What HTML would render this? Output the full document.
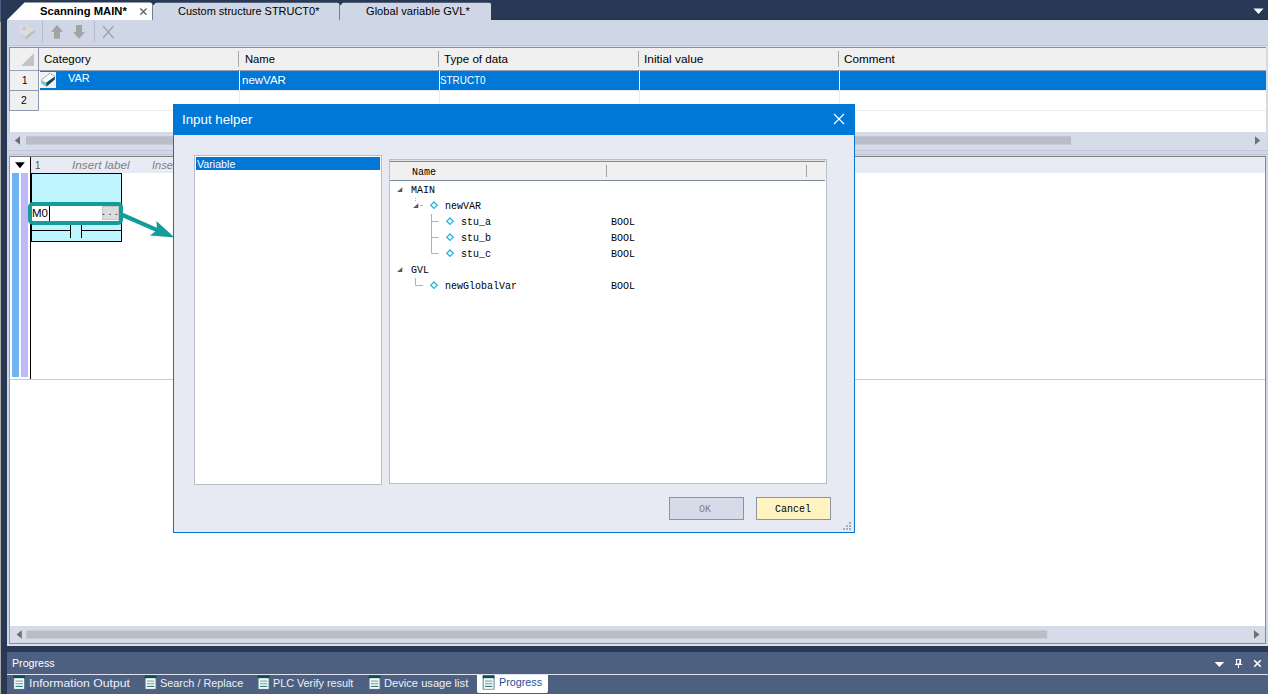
<!DOCTYPE html>
<html><head><meta charset="utf-8"><title>Input helper</title>
<style>
*{box-sizing:border-box;margin:0;padding:0}
html,body{width:1268px;height:694px;overflow:hidden;background:#293955;font-family:"Liberation Sans",sans-serif;font-size:11.5px;color:#000}
#root{position:relative;width:1268px;height:694px;overflow:hidden;background:#293955}
#root div,#root svg{position:absolute}
.t{white-space:nowrap;line-height:16px;transform-origin:0 0}
.m{font-family:"Liberation Mono",monospace}
</style></head><body>
<div id="root">
<!-- window left edge -->
<div style="left:0;top:0;width:1px;height:22px;background:#4d6082"></div>
<div style="left:0;top:22px;width:1px;height:672px;background:#a9a9a9"></div>

<!-- document tab strip -->
<div style="left:1px;top:19px;width:1267px;height:1px;background:#233150"></div>
<svg style="left:0;top:0" width="1268" height="21" viewBox="0 0 1268 21">
  <path d="M153 20 V2.7 H339.5 V20 Z" fill="#cfd6e5"/>
  <path d="M340 20 V2.7 H489.5 Q491 2.7 491 4.2 V20 Z" fill="#cfd6e5"/>
  <path d="M7 20 L24.5 2.6 H152.5 V20 Z" fill="#ffffff"/>
  <path d="M150.4 2 H156.6 L153.5 5.3 Z M337.4 2 H343.6 L340.5 5.3 Z" fill="#293955"/>
  <path d="M152.5 5 V20 M339.5 5 V20" stroke="#6f7d9c" stroke-width="1"/>
  <path d="M1253.5 8.5 H1263.5 L1258.5 14 Z" fill="#fff"/>
  <path d="M140.3 8.6 L146.5 14.8 M146.5 8.6 L140.3 14.8" stroke="#666" stroke-width="1.4" fill="none"/>
</svg>
<div class="t" style="left:40px;top:3px;transform:scaleX(0.9775);font-weight:bold">Scanning MAIN*</div>
<div class="t" style="left:178px;top:3px;transform:scaleX(0.9541)">Custom structure STRUCT0*</div>
<div class="t" style="left:366px;top:3px;transform:scaleX(0.9657)">Global variable GVL*</div>

<!-- editor area background -->
<div style="left:7px;top:20px;width:1261px;height:626px;background:#cfd6e5"></div>

<!-- toolbar -->
<svg style="left:7px;top:20px" width="130" height="25" viewBox="0 0 130 25">
  <path d="M35.5 1 V22 M87.5 1 V22" stroke="#b5bac8" stroke-width="1"/>
  <path d="M50 5 L56 11.8 H53 V18.8 H47 V11.8 H44 Z" fill="#a3a3a3"/>
  <path d="M72 18.8 L78 12.2 H75 V5 H69 V12.2 H66 Z" fill="#a3a3a3"/>
  <path d="M96.3 6.3 L106.5 18 M106.3 6.3 L96 18" stroke="#a3a3a3" stroke-width="1.4" fill="none"/>
  <path d="M14.3 14.2 L19 16.1 V19.6 L14.5 17.5 Z" fill="#cfcfcf"/>
  <path d="M19 16.1 L27.7 9.5 V12.3 L19 19.6 Z" fill="#bdbdbd"/>
  <path d="M14.5 14.5 L23.7 7.1 L27.7 9.5 L19 16.1 Z" fill="#dcdcdc"/>
  <path d="M12 8.5 H22.2 M17.1 3.4 V13.6 M13.5 4.9 L20.7 12.1 M20.7 4.9 L13.5 12.1" stroke="#dedede" stroke-width="1.6"/>
  <circle cx="17.1" cy="8.5" r="2" fill="#c9c9c9"/>
</svg>

<!-- variable grid -->
<div style="left:7px;top:45px;width:1261px;height:1px;background:#c3c7d1"></div>
<div style="left:7px;top:46px;width:1261px;height:1px;background:#d9deea"></div>
<div style="left:9px;top:47px;width:1258px;height:103px;background:#fff"></div>
<div style="left:9px;top:47px;width:1258px;height:1px;background:#8490a8"></div>
<div style="left:9px;top:47px;width:1px;height:85px;background:#c4cbdb"></div>
<div style="left:1266px;top:47px;width:1px;height:103px;background:#d9dde8"></div>
<div style="left:10px;top:48px;width:1256px;height:22px;background:#f0f0f0"></div>
<div style="left:10px;top:70px;width:29px;height:41px;background:#f0f0f0"></div>
<div style="left:10px;top:70px;width:1256px;height:1px;background:#9aa3b5"></div>
<div style="left:38px;top:48px;width:1px;height:63px;background:#8c98b0"></div>
<div style="left:10px;top:90px;width:29px;height:1px;background:#8c98b0"></div>
<div style="left:10px;top:110px;width:29px;height:1px;background:#8c98b0"></div>
<div style="left:9px;top:47px;width:1px;height:64px;background:#8490a8"></div>
<div style="left:40px;top:110px;width:1226px;height:1px;background:#ececec"></div>
<div style="left:40px;top:90px;width:1226px;height:1px;background:#ececec"></div>
<div style="left:238px;top:51px;width:1px;height:16px;background:#a8a8a8"></div>
<div style="left:438px;top:51px;width:1px;height:16px;background:#a8a8a8"></div>
<div style="left:638px;top:51px;width:1px;height:16px;background:#a8a8a8"></div>
<div style="left:838px;top:51px;width:1px;height:16px;background:#a8a8a8"></div>
<div style="left:239px;top:90px;width:1px;height:20px;background:#ececec"></div>
<div style="left:439px;top:90px;width:1px;height:20px;background:#ececec"></div>
<div style="left:639px;top:90px;width:1px;height:20px;background:#ececec"></div>
<div style="left:839px;top:90px;width:1px;height:20px;background:#ececec"></div>
<svg style="left:20px;top:52px" width="15" height="15"><path d="M14 1 V14 H1 Z" fill="#c0c4cc"/></svg>
<div class="t" style="left:44px;top:51px;transform:scaleX(1.0000)">Category</div>
<div class="t" style="left:245px;top:51px;transform:scaleX(0.9774)">Name</div>
<div class="t" style="left:444px;top:51px;transform:scaleX(1.0094)">Type of data</div>
<div class="t" style="left:644px;top:51px;transform:scaleX(1.0310)">Initial value</div>
<div class="t" style="left:844px;top:51px;transform:scaleX(1.0180)">Comment</div>
<!-- selected row -->
<div style="left:40px;top:71px;width:1226px;height:19px;background:#0078d7"></div>
<div style="left:239px;top:71px;width:1px;height:19px;background:#fff"></div>
<div style="left:439px;top:71px;width:1px;height:19px;background:#fff"></div>
<div style="left:639px;top:71px;width:1px;height:19px;background:#fff"></div>
<div style="left:839px;top:71px;width:1px;height:19px;background:#fff"></div>
<div style="left:40px;top:72px;width:16px;height:16px;background:#f3f3f3"></div>
<svg style="left:40px;top:72px" width="16" height="16" viewBox="0 0 16 16">
  <path d="M1.2 7.8 L6.2 10.5 L6.4 14.7 L1.2 11.6 Z" fill="#7cc6c2"/>
  <path d="M6.2 10.5 L14.8 4.3 V7.4 L6.4 14.7 Z" fill="#0f4a5a"/>
  <path d="M1.5 7.8 L9.7 1.2 L14.8 4.3 L6.2 10.5 Z" fill="#fbfbfb"/>
  <path d="M1.5 7.8 L9.7 1.2 L14.8 4.3" fill="none" stroke="#5f8196" stroke-width="1" stroke-dasharray="1.2 0.8"/>
</svg>
<div class="t" style="left:68px;top:70px;transform:scaleX(0.9522);color:#fff">VAR</div>
<div class="t" style="left:242px;top:72px;transform:scaleX(1.0000);color:#fff">newVAR</div>
<div class="t" style="left:440px;top:72px;transform:scaleX(0.8585);color:#fff">STRUCT0</div>
<div class="t" style="left:22px;top:72px;transform:scaleX(0.8500)">1</div>
<div class="t" style="left:21px;top:92px;transform:scaleX(0.9000)">2</div>
<!-- grid horizontal scrollbar -->
<div style="left:9px;top:132px;width:1258px;height:18px;background:#d6dbe9"></div>

<svg style="left:9px;top:132px" width="1258" height="18"><rect x="17" y="4.3" width="1045" height="8.3" fill="#b9bdc6"/><path d="M11 4.2 V12.8 L5.8 8.5 Z" fill="#707070"/><path d="M1246 4.2 V12.8 L1251.2 8.5 Z" fill="#707070"/></svg>
<div style="left:7px;top:150px;width:1261px;height:1px;background:#c1c7d6"></div>
<div style="left:7px;top:154px;width:1261px;height:1px;background:#c1c7d6"></div>

<!-- ladder editor -->
<div style="left:9px;top:156px;width:1257px;height:488px;background:#fff"></div>
<div style="left:9px;top:156px;width:1257px;height:1px;background:#808080"></div>
<div style="left:9px;top:156px;width:1px;height:488px;background:#9a9a9a"></div>
<div style="left:1265px;top:156px;width:1px;height:488px;background:#8a8a8a"></div>
<div style="left:9px;top:643px;width:1257px;height:1px;background:#8a8a8a"></div>
<div style="left:7px;top:644px;width:1261px;height:2px;background:#dbe0ec"></div>
<div style="left:31px;top:157px;width:1234px;height:16px;background:#e8ebf3"></div>
<div style="left:30px;top:157px;width:1px;height:223px;background:#000"></div>
<div style="left:10px;top:379px;width:1255px;height:1px;background:#cbcbcb"></div>
<svg style="left:12px;top:159px" width="16" height="12"><path d="M3 3.2 H12.8 L7.9 9.2 Z" fill="#000"/></svg>
<div style="left:12px;top:173px;width:7px;height:204px;background:#6eb4f0"></div>
<div style="left:21px;top:173px;width:7px;height:204px;background:#beb9fa"></div>
<div class="t" style="left:35px;top:157px;transform:scaleX(0.8500);color:#5a5046">1</div>
<div class="t" style="left:72px;top:157px;transform:scaleX(1.0246);color:#808080;font-style:italic">Insert label</div>
<div class="t" style="left:152px;top:157px;transform:scaleX(0.9625);color:#808080;font-style:italic">Insert comment</div>
<!-- contact element -->
<div style="left:31px;top:173px;width:91px;height:69px;background:#bff5ff;border:1px solid #000"></div>
<div style="left:32px;top:230px;width:38px;height:1px;background:#000"></div>
<div style="left:82px;top:230px;width:39px;height:1px;background:#000"></div>
<div style="left:70px;top:224px;width:1px;height:14px;background:#000"></div>
<div style="left:81px;top:224px;width:1px;height:14px;background:#000"></div>
<div style="left:28px;top:202px;width:95px;height:23px;border:4px solid #169b9b;border-radius:5px;background:#fff"></div>
<div style="left:102px;top:206px;width:17px;height:14px;background:#dcdcdc;border:1px solid #c6c6c6"></div>
<div class="t" style="left:102px;top:203px;letter-spacing:3.2px;color:#222">...</div>
<div class="t" style="left:32px;top:205px;transform:scaleX(1.0000)">M0</div>
<div style="left:49px;top:206px;width:1px;height:15px;background:#000"></div>

<!-- ladder horizontal scrollbar -->
<div style="left:10px;top:626px;width:1255px;height:17px;background:#d6dbe9"></div>

<svg style="left:10px;top:626px" width="1256" height="18"><rect x="16.4" y="4.5" width="1020.7" height="8" fill="#b9bdc6"/><path d="M11.8 4.2 V12.8 L6.5 8.5 Z" fill="#707070"/><path d="M1244 4.2 V12.8 L1249.5 8.5 Z" fill="#707070"/></svg>

<!-- output panel -->
<div style="left:7px;top:652px;width:1261px;height:42px;background:#4d6082"></div>
<div style="left:7px;top:674px;width:1261px;height:1px;background:#dfe4ee"></div>
<div class="t" style="left:12px;top:655px;transform:scaleX(0.9261);color:#fff">Progress</div>
<svg style="left:1210px;top:655px" width="56" height="16" viewBox="0 0 56 16">
  <path d="M4.6 7 H14.2 L9.4 12 Z" fill="#fff"/>
  <path d="M26.5 4.5 H30.5 V9 H26.5 Z M25 9.5 H32.2 M28.5 10 V13" stroke="#fff" stroke-width="1.1" fill="none"/><path d="M29.3 4 h1.7 v5.5 h-1.7z" fill="#fff"/>
  <path d="M44.2 5.2 L50.8 11.8 M50.8 5.2 L44.2 11.8" stroke="#fff" stroke-width="1.6" fill="none"/>
</svg>
<div style="left:477px;top:675px;width:71px;height:18px;background:#fff;border-radius:0 0 2px 2px"></div>
<div class="t" style="left:29px;top:675px;transform:scaleX(1.0583);color:#eef1f6">Information Output</div>
<div class="t" style="left:160px;top:675px;transform:scaleX(0.9432);color:#eef1f6">Search / Replace</div>
<div class="t" style="left:273px;top:675px;transform:scaleX(0.9384);color:#eef1f6">PLC Verify result</div>
<div class="t" style="left:384px;top:675px;transform:scaleX(0.9690);color:#eef1f6">Device usage list</div>
<div class="t" style="left:499px;top:674px;transform:scaleX(0.9348);color:#1b4f9c">Progress</div>
<svg style="left:0;top:674px" width="500" height="20" viewBox="0 0 500 20">
  <g transform="translate(0 0)"><rect x="13.2" y="1.4" width="11.8" height="14.2" fill="#3f7f88"/><rect x="13.2" y="1.4" width="11.8" height="2.8" fill="#0f4a55"/><rect x="14.1" y="4.2" width="10" height="10.7" fill="#f6f8f6"/><path d="M15.5 7.1 H22.8 M15.5 9.7 H22.8" stroke="#86aeb0" stroke-width="1.2"/><path d="M15.5 12.4 H22.8" stroke="#2f7680" stroke-width="1.1"/></g>
  <g transform="translate(131.5 0)"><rect x="13.2" y="1.4" width="11.8" height="14.2" fill="#3f7f88"/><rect x="13.2" y="1.4" width="11.8" height="2.8" fill="#0f4a55"/><rect x="14.1" y="4.2" width="10" height="10.7" fill="#f6f8f6"/><path d="M15.5 7.1 H22.8 M15.5 9.7 H22.8" stroke="#86aeb0" stroke-width="1.2"/><path d="M15.5 12.4 H22.8" stroke="#2f7680" stroke-width="1.1"/></g>
  <g transform="translate(244.5 0)"><rect x="13.2" y="1.4" width="11.8" height="14.2" fill="#3f7f88"/><rect x="13.2" y="1.4" width="11.8" height="2.8" fill="#0f4a55"/><rect x="14.1" y="4.2" width="10" height="10.7" fill="#f6f8f6"/><path d="M15.5 7.1 H22.8 M15.5 9.7 H22.8" stroke="#86aeb0" stroke-width="1.2"/><path d="M15.5 12.4 H22.8" stroke="#2f7680" stroke-width="1.1"/></g>
  <g transform="translate(355.5 0)"><rect x="13.2" y="1.4" width="11.8" height="14.2" fill="#3f7f88"/><rect x="13.2" y="1.4" width="11.8" height="2.8" fill="#0f4a55"/><rect x="14.1" y="4.2" width="10" height="10.7" fill="#f6f8f6"/><path d="M15.5 7.1 H22.8 M15.5 9.7 H22.8" stroke="#86aeb0" stroke-width="1.2"/><path d="M15.5 12.4 H22.8" stroke="#2f7680" stroke-width="1.1"/></g>
  <g transform="translate(469.5 0)"><rect x="13.2" y="1.4" width="11.8" height="14.2" fill="#3f7f88"/><rect x="13.2" y="1.4" width="11.8" height="2.8" fill="#0f4a55"/><rect x="14.1" y="4.2" width="10" height="10.7" fill="#f6f8f6"/><path d="M15.5 7.1 H22.8 M15.5 9.7 H22.8" stroke="#86aeb0" stroke-width="1.2"/><path d="M15.5 12.4 H22.8" stroke="#2f7680" stroke-width="1.1"/></g>
</svg>

<!-- Input helper dialog -->
<div style="left:173px;top:104px;width:682px;height:429px;background:#e7eaf3;border:1px solid #0078d7"></div>
<div style="left:173px;top:104px;width:682px;height:31px;background:#0078d7"></div>
<div class="t" style="left:182px;top:112px;transform:scaleX(1.1094);font-size:12px;color:#fff">Input helper</div>
<svg style="left:830px;top:110px" width="18" height="18" viewBox="0 0 18 18"><path d="M4 4 L14 14 M14 4 L4 14" stroke="#fff" stroke-width="1.2" fill="none"/></svg>
<div style="left:194px;top:155px;width:188px;height:330px;background:#fff;border:1px solid #b9bdc9"></div>
<div style="left:196px;top:157px;width:184px;height:13px;background:#0078d7"></div>
<div class="t" style="left:197px;top:156px;transform:scaleX(0.9268);color:#fff">Variable</div>
<div style="left:389px;top:159px;width:438px;height:325px;background:#fff;border:1px solid #b9bdc9"></div>
<div style="left:390px;top:160px;width:436px;height:1px;background:#e0e0e0"></div>
<div style="left:390px;top:161px;width:435px;height:1px;background:#7f8a9f"></div>
<div style="left:390px;top:162px;width:436px;height:18px;background:#f0f0f0"></div>
<div style="left:390px;top:180px;width:435px;height:1px;background:#7f8a9f"></div>
<div style="left:606px;top:165px;width:1px;height:12px;background:#a0a0a0"></div>
<div style="left:806px;top:165px;width:1px;height:12px;background:#a0a0a0"></div>
<div class="t m" style="left:412px;top:164px;transform:scaleX(0.8696)">Name</div>
<div class="t m" style="left:411px;top:182px;transform:scaleX(0.8696)">MAIN</div>
<div class="t m" style="left:445px;top:198px;transform:scaleX(0.8696)">newVAR</div>
<div class="t m" style="left:461px;top:214px;transform:scaleX(0.8696)">stu_a</div>
<div class="t m" style="left:461px;top:230px;transform:scaleX(0.8696)">stu_b</div>
<div class="t m" style="left:461px;top:246px;transform:scaleX(0.8696)">stu_c</div>
<div class="t m" style="left:411px;top:262px;transform:scaleX(0.8696)">GVL</div>
<div class="t m" style="left:445px;top:278px;transform:scaleX(0.8696)">newGlobalVar</div>
<div class="t m" style="left:611px;top:214px;transform:scaleX(0.8696)">BOOL</div>
<div class="t m" style="left:611px;top:230px;transform:scaleX(0.8696)">BOOL</div>
<div class="t m" style="left:611px;top:246px;transform:scaleX(0.8696)">BOOL</div>
<div class="t m" style="left:611px;top:278px;transform:scaleX(0.8696)">BOOL</div>
<svg style="left:390px;top:181px" width="100" height="112" viewBox="0 0 100 112">
  <path d="M12.3 6.3 V11.1 H7.1 Z" fill="#5a5a5a"/>
  <path d="M28.3 22.3 V27.1 H23.1 Z" fill="#5a5a5a"/>
  <path d="M12.3 86.3 V91.1 H7.1 Z" fill="#5a5a5a"/>
  <path d="M25.5 17 V20" stroke="#b0b0b0" stroke-dasharray="1 1" fill="none"/>
  <path d="M30 24.5 H33" stroke="#b0b0b0" fill="none"/>
  <path d="M41.5 33 V72.5 H48.5 M41.5 40.5 H48.5 M41.5 56.5 H48.5" stroke="#b0b0b0" fill="none"/>
  <path d="M25.5 97 V104.5 H33" stroke="#b0b0b0" fill="none"/>
  <g fill="#fff" stroke="#22b8e0" stroke-width="1.3">
   <path d="M44 21 L47.2 24.2 L44 27.4 L40.8 24.2 Z"/>
   <path d="M60 37 L63.2 40.2 L60 43.4 L56.8 40.2 Z"/>
   <path d="M60 53 L63.2 56.2 L60 59.4 L56.8 56.2 Z"/>
   <path d="M60 69 L63.2 72.2 L60 75.4 L56.8 72.2 Z"/>
   <path d="M44 101 L47.2 104.2 L44 107.4 L40.8 104.2 Z"/>
  </g>
</svg>
<!-- annotation arrow -->
<svg style="left:118px;top:205px" width="60" height="40" viewBox="0 0 60 40">
  <path d="M4.9 7.8 L38.9 22.8 L38.4 16.1 L56.5 32.6 L32 30.6 L37.2 26.5 L4.9 12.4 Z" fill="#169b9b"/>
</svg>
<!-- buttons -->
<div style="left:669px;top:497px;width:75px;height:23px;background:#d5dbe8;border:1px solid #8a93a8"></div>
<div style="left:756px;top:497px;width:75px;height:23px;background:#fff4c1;border:1px solid #8a93a8"></div>
<div class="t m" style="left:699px;top:501px;transform:scaleX(0.8696);color:#808080">OK</div>
<div class="t m" style="left:775px;top:501px;transform:scaleX(0.8696)">Cancel</div>
<svg style="left:841px;top:520px" width="12" height="12" viewBox="0 0 12 12"><g fill="#a8adb8"><rect x="8" y="2" width="2" height="2"/><rect x="5" y="5" width="2" height="2"/><rect x="8" y="5" width="2" height="2"/><rect x="2" y="8" width="2" height="2"/><rect x="5" y="8" width="2" height="2"/><rect x="8" y="8" width="2" height="2"/></g></svg>
</div>
</body></html>
